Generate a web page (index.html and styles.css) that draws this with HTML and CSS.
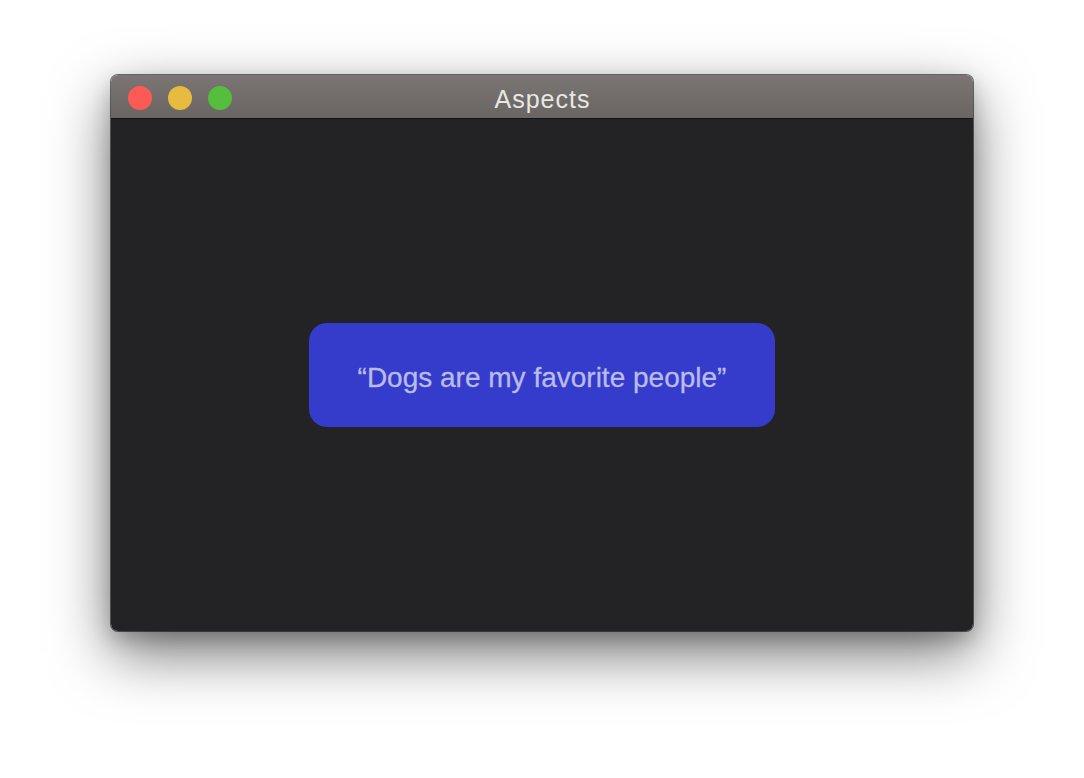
FILE: index.html
```html
<!DOCTYPE html>
<html>
<head>
<meta charset="utf-8">
<title>Aspects</title>
<link rel="stylesheet" href="styles.css">
</head>
<body>
<div class="window">
  <div class="titlebar">
    <div class="lights">
      <span class="light red"></span>
      <span class="light yellow"></span>
      <span class="light green"></span>
    </div>
    <div class="title">Aspects</div>
  </div>
  <div class="content">
    <div class="quote">“Dogs are my favorite people”</div>
  </div>
</div>
</body>
</html>
```

FILE: styles.css
```css
html, body {
  margin: 0;
  padding: 0;
  background: #ffffff;
}
body {
  width: 1084px;
  height: 778px;
  overflow: hidden;
  padding-top: 75px;
  padding-left: 111px;
  box-sizing: border-box;
  font-family: "Liberation Sans", Arial, sans-serif;
}
.window {
  width: 862px;
  height: 556px;
  border-radius: 7px;
  overflow: hidden;
  display: flex;
  flex-direction: column;
  box-shadow: 0 0 0 1px rgba(0,0,0,0.55), 0 22px 60px rgba(0,0,0,0.55), 0 8px 20px rgba(0,0,0,0.2);
}
.titlebar {
  height: 43px;
  flex: none;
  position: relative;
  display: flex;
  align-items: center;
  justify-content: center;
  background: linear-gradient(#7b7673, #696562);
  border-bottom: 1px solid #141414;
}
.lights {
  position: absolute;
  left: 17px;
  top: 11px;
  display: flex;
  gap: 16px;
}
.light {
  width: 24px;
  height: 24px;
  border-radius: 50%;
}
.red { background: #fe5a55; }
.yellow { background: #e6bb3e; }
.green { background: #55be3d; }
.title {
  color: #e9e7e5;
  font-size: 25px;
  letter-spacing: 1px;
  padding-top: 5px;
  padding-left: 1px;
}
.content {
  flex: 1;
  background: #232325;
  display: flex;
  align-items: center;
  justify-content: center;
}
.quote {
  width: 466px;
  height: 104px;
  box-sizing: border-box;
  padding-top: 5px;
  border-radius: 18px;
  background: #353bcb;
  color: #b9bbe8;
  font-size: 28px;
  -webkit-text-stroke: 0.3px #b9bbe8;
  display: flex;
  align-items: center;
  justify-content: center;
}
```
